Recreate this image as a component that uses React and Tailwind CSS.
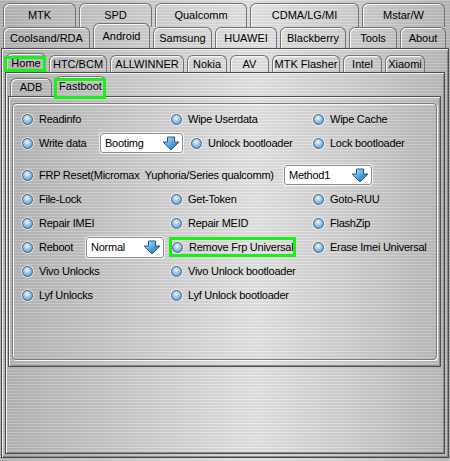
import React from "react";

const metal =
  "bg-[repeating-linear-gradient(180deg,rgba(255,255,255,0.16)_0px,rgba(255,255,255,0.16)_1px,rgba(0,0,0,0.04)_1px,rgba(0,0,0,0.04)_3px),linear-gradient(90deg,#b4b4b4_0%,#c6c6c6_22%,#e4e4e4_57%,#cccccc_82%,#b8b8b8_100%)]";

function Tab({ label, w, h, children }) {
  return (
    <div
      className={`relative flex shrink-0 items-center justify-center rounded-t-[6px] border border-b-0 border-[#747474] shadow-[inset_1px_1px_0_#f6f6f6] text-[11px] leading-none text-black ${w} ${h}`}
    >
      {label}
      {children}
    </div>
  );
}

function Radio() {
  return (
    <span className="inline-block h-[11px] w-[11px] shrink-0 rounded-full border border-[#45698a] bg-[radial-gradient(circle_at_45%_35%,#f0f8ff_0%,#9cc6ea_42%,#4f87bb_100%)] shadow-[0_0_0_1px_rgba(255,255,255,0.6)]" />
  );
}

function Opt({ label, w = "" }) {
  return (
    <div className={`flex shrink-0 items-center gap-[6px] ${w}`}>
      <Radio />
      <span className="whitespace-pre tracking-[-0.25px]">{label}</span>
    </div>
  );
}

function Arrow() {
  return (
    <svg width="18" height="15" viewBox="0 0 18 15">
      <defs>
        <linearGradient id="ag" x1="0" y1="0" x2="1" y2="1">
          <stop offset="0" stopColor="#c6eaff" />
          <stop offset="0.5" stopColor="#56a6e0" />
          <stop offset="1" stopColor="#1f62a2" />
        </linearGradient>
      </defs>
      <polygon
        points="5.5,1 12.5,1 12.5,6 17,6 9,14 1,6 5.5,6"
        fill="url(#ag)"
        stroke="#275a87"
        strokeWidth="1"
        strokeLinejoin="round"
      />
    </svg>
  );
}

function Combo({ value, w, h = "h-[20px]" }) {
  return (
    <div
      className={`flex shrink-0 items-center justify-between rounded-[3px] border border-[#8d8d8d] bg-white pl-[4px] pr-[2px] shadow-[0_0_0_1px_rgba(255,255,255,0.7)] ${w} ${h}`}
    >
      <span className="tracking-[-0.25px]">{value}</span>
      <Arrow />
    </div>
  );
}

function Row({ children, extra = "" }) {
  return <div className={`flex h-[24px] items-center ${extra}`}>{children}</div>;
}

export default function App() {
  return (
    <div
      className={`h-[461px] w-[450px] overflow-hidden ${metal} font-['Liberation_Sans',Arial,sans-serif] text-[11px] text-black`}
    >
      {/* top tab rows */}
      <div className="px-[3px] pt-[3px]">
        <div className="flex h-[24px] gap-[3px]">
          <Tab label="MTK" w="w-[73px]" h="h-[24px]" />
          <Tab label="SPD" w="w-[73px]" h="h-[24px]" />
          <Tab label="Qualcomm" w="w-[92px]" h="h-[24px]" />
          <Tab label="CDMA/LG/MI" w="w-[109px]" h="h-[24px]" />
          <Tab label="Mstar/W" w="w-[83px]" h="h-[24px]" />
        </div>
        <div className="flex h-[21px] items-end gap-[3px]">
          <Tab label="Coolsand/RDA" w="w-[87px]" h="h-[21px]" />
          <Tab label="Android" w="w-[57px]" h="h-[25px]" />
          <Tab label="Samsung" w="w-[59px]" h="h-[21px]" />
          <Tab label="HUAWEI" w="w-[62px]" h="h-[21px]" />
          <Tab label="Blackberry" w="w-[66px]" h="h-[21px]" />
          <Tab label="Tools" w="w-[48px]" h="h-[21px]" />
          <Tab label="About" w="w-[46px]" h="h-[21px]" />
        </div>
      </div>

      {/* level 1 panel */}
      <div className="ml-[1px] flex h-[410px] w-[448px] flex-col border border-[#4a4a4a] px-[3px] pb-[3px] pt-[4px] shadow-[inset_1px_1px_0_#f2f2f2,inset_-1px_-1px_0_#8a8a8a]">
        <div className="ml-[1px] flex h-[19px] items-end gap-[3px]">
          <Tab label="Home" w="w-[40px]" h="h-[19px]">
            <span className="absolute -left-[3px] -right-[1px] top-[2px] bottom-0 z-10 border-[3px] border-[#19f019]" />
          </Tab>
          <Tab label="HTC/BCM" w="w-[58px]" h="h-[17px]" />
          <Tab label="ALLWINNER" w="w-[74px]" h="h-[17px]" />
          <Tab label="Nokia" w="w-[40px]" h="h-[17px]" />
          <Tab label="AV" w="w-[39px]" h="h-[17px]" />
          <Tab label="MTK Flasher" w="w-[68px]" h="h-[17px]" />
          <Tab label="Intel" w="w-[39px]" h="h-[17px]" />
          <Tab label="Xiaomi" w="w-[40px]" h="h-[17px]" />
        </div>

        {/* level 2 panel */}
        <div className="flex flex-1 flex-col border border-[#4d4d4d] pt-[3px] shadow-[inset_1px_1px_0_#f2f2f2,inset_-1px_-1px_0_#8c8c8c]">
          <div className="ml-[4px] flex h-[20px] items-end gap-[3px]">
            <Tab label="ADB" w="w-[42px]" h="h-[18px]" />
            <Tab label="Fastboot" w="w-[51px]" h="h-[20px]">
              <span className="absolute -left-[2px] -right-[1px] top-[1px] -bottom-[3px] z-10 border-[3px] border-[#19f019]" />
            </Tab>
          </div>

          {/* level 3 panel */}
          <div className="ml-[2px] h-[271px] w-[433px] border border-[#505050] pl-[3px] pt-[6px] shadow-[inset_1px_1px_0_#f2f2f2,inset_-1px_-1px_0_#8c8c8c]">
            {/* group box */}
            <div className="h-[257px] w-[425px] rounded-[4px] border border-[#7c7c7c] pl-[9px] pt-[3px] shadow-[inset_1px_1px_0_#f7f7f7,1px_1px_0_#f7f7f7]">
              <Row>
                <Opt label="Readinfo" w="w-[149px]" />
                <Opt label="Wipe Userdata" w="w-[142px]" />
                <Opt label="Wipe Cache" />
              </Row>
              <Row>
                <Opt label="Write data" w="w-[78px]" />
                <Combo value="Bootimg" w="w-[83px]" />
                <Opt label="Unlock bootloader" w="ml-[8px] w-[122px]" />
                <Opt label="Lock bootloader" />
              </Row>
              <Row extra="mt-[8px]">
                <Opt label="FRP Reset(Micromax  Yuphoria/Series qualcomm)" w="w-[262px]" />
                <Combo value="Method1" w="w-[88px]" />
              </Row>
              <Row>
                <Opt label="File-Lock" w="w-[149px]" />
                <Opt label="Get-Token" w="w-[142px]" />
                <Opt label="Goto-RUU" />
              </Row>
              <Row>
                <Opt label="Repair IMEI" w="w-[149px]" />
                <Opt label="Repair MEID" w="w-[142px]" />
                <Opt label="FlashZip" />
              </Row>
              <Row>
                <Opt label="Reboot" w="w-[64px]" />
                <Combo value="Normal" w="w-[78px]" h="h-[21px]" />
                <div className="ml-[7px] flex w-[142px] shrink-0 items-center">
                  <div className="ml-[1px] flex h-[14px] w-[121px] items-center outline-[3px] outline-solid outline-[#19f019]">
                    <Opt label="Remove Frp Universal" />
                  </div>
                </div>
                <Opt label="Erase Imei Universal" />
              </Row>
              <Row>
                <Opt label="Vivo Unlocks" w="w-[149px]" />
                <Opt label="Vivo Unlock bootloader" w="w-[142px]" />
              </Row>
              <Row>
                <Opt label="Lyf Unlocks" w="w-[149px]" />
                <Opt label="Lyf Unlock bootloader" w="w-[142px]" />
              </Row>
            </div>
          </div>
        </div>
      </div>
    </div>
  );
}
